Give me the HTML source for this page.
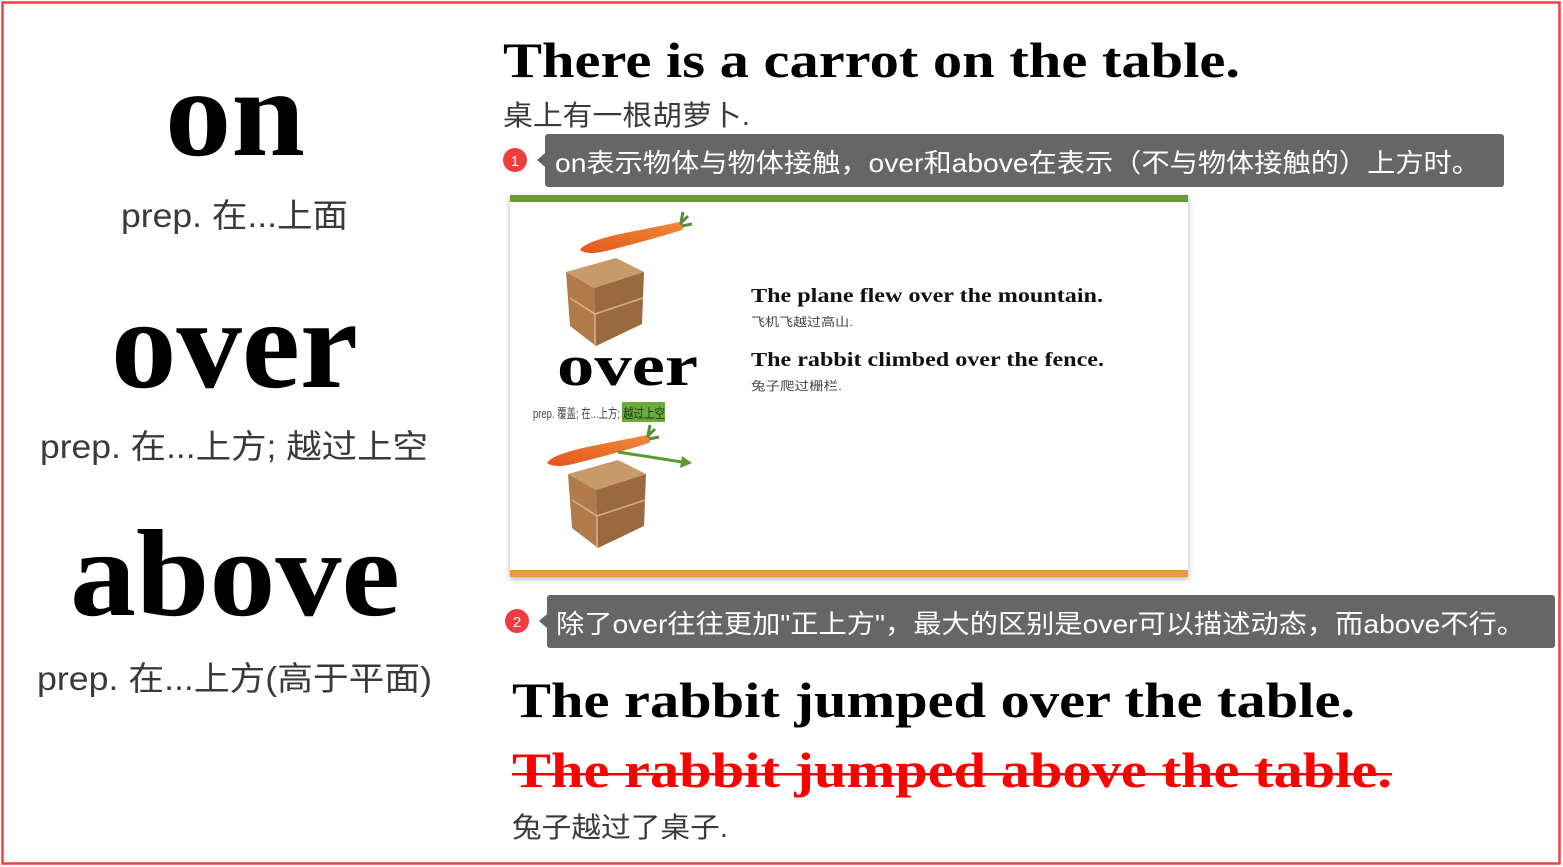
<!DOCTYPE html>
<html><head><meta charset="utf-8"><style>html,body{margin:0;padding:0;background:#fff}svg{display:block}</style></head>
<body>
<svg width="1563" height="867" viewBox="0 0 1563 867" xmlns="http://www.w3.org/2000/svg">
<defs>
<filter id="sh" x="-5%" y="-5%" width="110%" height="115%"><feDropShadow dx="0" dy="2" stdDeviation="3" flood-color="#000" flood-opacity="0.3"/></filter>
<linearGradient id="car" x1="0" y1="1" x2="1" y2="0"><stop offset="0" stop-color="#e5561c"/><stop offset="1" stop-color="#f08a3a"/></linearGradient>
<g id="carrot"><path d="M0 28 Q4 20 40 12 Q80 4 100 0 Q106 2 102 8 Q70 18 30 28 Q8 34 0 28Z" fill="url(#car)"/><path d="M100 2 l8 -8 M102 4 l10 -2 M101 0 l2 -10" stroke="#5a8a3a" stroke-width="3"/></g>
<g id="box"><polygon points="0,14 50,0 78,14 28,30" fill="#c89a6a"/><polygon points="0,14 28,30 30,88 4,68" fill="#b07a4a"/><polygon points="28,30 78,14 76,66 30,88" fill="#9a6a3e"/><path d="M4 40 L29 56 L77 40 M29 56 L29 88" stroke="#d8b08a" stroke-width="1.5" fill="none"/></g>
</defs>
<rect width="1563" height="867" fill="#fff"/>
<rect x="2.5" y="2.5" width="1557" height="861" fill="none" stroke="#f04040" stroke-width="2.5"/>

<g font-family="Liberation Serif, serif" font-weight="bold" fill="#000">
<text x="165" y="155" font-size="125" textLength="140" lengthAdjust="spacingAndGlyphs">on</text>
<text x="111" y="387" font-size="128" textLength="247" lengthAdjust="spacingAndGlyphs">over</text>
<text x="70" y="615" font-size="124" textLength="330" lengthAdjust="spacingAndGlyphs">above</text>
<text x="503" y="77" font-size="50" textLength="737" lengthAdjust="spacingAndGlyphs">There is a carrot on the table.</text>
<text x="512" y="717" font-size="50" textLength="843" lengthAdjust="spacingAndGlyphs">The rabbit jumped over the table.</text>
<text x="512" y="787" font-size="50" textLength="880" lengthAdjust="spacingAndGlyphs" fill="#f00">The rabbit jumped above the table.</text>
</g>
<rect x="512" y="773" width="880" height="2.5" fill="#e00"/>

<g font-family="Liberation Sans, Noto Sans CJK SC, sans-serif" fill="#3a3a3a">
<text x="121" y="227" font-size="33" textLength="227" lengthAdjust="spacingAndGlyphs">prep. 在...上面</text>
<text x="40" y="458" font-size="33" textLength="388" lengthAdjust="spacingAndGlyphs">prep. 在...上方; 越过上空</text>
<text x="37" y="690" font-size="33" textLength="395" lengthAdjust="spacingAndGlyphs">prep. 在...上方(高于平面)</text>
<text x="503" y="125" font-size="28" textLength="247" lengthAdjust="spacingAndGlyphs">桌上有一根胡萝卜.</text>
<text x="512" y="837" font-size="28" textLength="216" lengthAdjust="spacingAndGlyphs">兔子越过了桌子.</text>
</g>

<!-- callout 1 -->
<circle cx="515" cy="160" r="12" fill="#f03c3c"/>
<text x="515" y="166" font-family="Liberation Sans, sans-serif" font-size="15" fill="#fff" text-anchor="middle">1</text>
<rect x="545" y="134" width="959" height="53" rx="3" fill="#666"/>
<polygon points="545,153 537,160 545,167" fill="#666"/>
<text x="555" y="172" font-family="Liberation Sans, Noto Sans CJK SC, sans-serif" font-size="26" fill="#fff" textLength="925" lengthAdjust="spacingAndGlyphs">on表示物体与物体接触，over和above在表示（不与物体接触的）上方时。</text>

<!-- callout 2 -->
<circle cx="517" cy="621" r="12" fill="#f03c3c"/>
<text x="517" y="627" font-family="Liberation Sans, sans-serif" font-size="15" fill="#fff" text-anchor="middle">2</text>
<rect x="547" y="595" width="1008" height="53" rx="3" fill="#666"/>
<polygon points="547,614 539,621 547,628" fill="#666"/>
<text x="556" y="633" font-family="Liberation Sans, Noto Sans CJK SC, sans-serif" font-size="26" fill="#fff" textLength="969" lengthAdjust="spacingAndGlyphs">除了over往往更加"正上方"，最大的区别是over可以描述动态，而above不行。</text>

<!-- card -->
<rect x="510" y="195" width="678" height="382" fill="#fff" filter="url(#sh)"/>
<rect x="510" y="195" width="678" height="7" fill="#6a9a34"/>
<rect x="510" y="570" width="678" height="7" fill="#ea9a38"/>
<use href="#carrot" x="580" y="222"/>
<use href="#box" x="566" y="258"/>
<use href="#carrot" x="547" y="435"/>
<path d="M618 452 L682 462" stroke="#5a9a30" stroke-width="3"/><polygon points="682,456 692,463 680,468" fill="#5a9a30"/>
<use href="#box" x="568" y="460"/>
<text x="557" y="385" font-family="Liberation Serif, serif" font-weight="bold" font-size="58" textLength="141" lengthAdjust="spacingAndGlyphs">over</text>
<rect x="622" y="402" width="43" height="20" fill="#6aaa3a"/>
<text x="533" y="418" font-family="Liberation Sans, Noto Sans CJK SC, sans-serif" font-size="13" fill="#444" textLength="87" lengthAdjust="spacingAndGlyphs">prep. 覆盖; 在...上方;</text>
<text x="623" y="418" font-family="Liberation Sans, Noto Sans CJK SC, sans-serif" font-size="13" fill="#1a3a10" textLength="42" lengthAdjust="spacingAndGlyphs">越过上空</text>
<g font-family="Liberation Serif, serif" font-weight="bold" fill="#111">
<text x="751" y="302" font-size="20" textLength="352" lengthAdjust="spacingAndGlyphs">The plane flew over the mountain.</text>
<text x="751" y="366" font-size="20" textLength="353" lengthAdjust="spacingAndGlyphs">The rabbit climbed over the fence.</text>
</g>
<g font-family="Liberation Sans, Noto Sans CJK SC, sans-serif" fill="#444" font-size="12">
<text x="751" y="326" textLength="102" lengthAdjust="spacingAndGlyphs">飞机飞越过高山.</text>
<text x="751" y="390" textLength="91" lengthAdjust="spacingAndGlyphs">兔子爬过栅栏.</text>
</g>
</svg>
</body></html>
